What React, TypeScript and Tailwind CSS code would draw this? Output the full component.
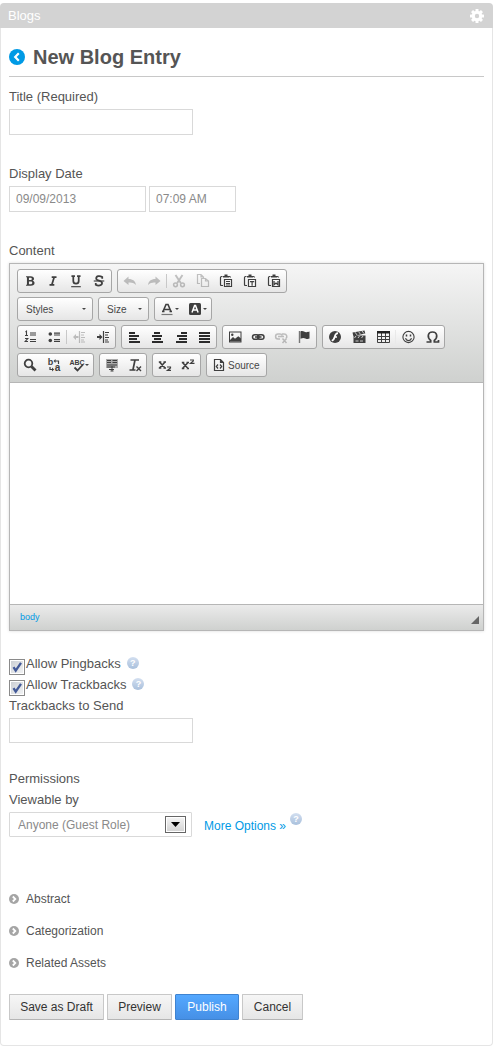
import type { ReactNode } from "react";

const ink = "#3f3f3f";

function Icon({ children, faded = false, size = 16 }: { children: ReactNode; faded?: boolean; size?: number }) {
  return (
    <svg width={size} height={size} viewBox="0 0 16 16" fill="none" stroke={ink} className={faded ? "shrink-0 opacity-30" : "shrink-0"} aria-hidden="true">
      {children}
    </svg>
  );
}

function Letter({ children, x = 8, y = 12, size = 12, bold = true }: { children: string; x?: number; y?: number; size?: number; bold?: boolean }) {
  return (
    <text x={x} y={y} fontSize={size} fontWeight={bold ? 700 : 400} textAnchor="middle" fill={ink} stroke="none" fontFamily="Liberation Sans, sans-serif">
      {children}
    </text>
  );
}

function Bars({ rows }: { rows: number[][] }) {
  return (
    <Icon>
      {rows.map(([x, w], i) => (
        <rect key={i} x={x} y={3 + i * 3} width={w} height="2" fill="#2b2b2b" stroke="none" />
      ))}
    </Icon>
  );
}

function Clipboard({ children }: { children: ReactNode }) {
  return (
    <Icon>
      <path d="M5 12.500H3.500Q2.500 12.500 2.500 11.500V4.500Q2.500 3.500 3.500 3.500H4.500M10.500 3.500H11.500Q12.500 3.500 12.500 4.500" strokeWidth="1.200" />
      <path d="M5 3h1.500V1.500h3V3H11v1.500H5z" fill={ink} stroke="none" />
      <path d="M6.500 6.500h7v7h-7z" fill="#fafafa" strokeWidth="1.200" />
      {children}
    </Icon>
  );
}

const undoPath = "M6.500 3.500L1.500 8l5 4V9.500c3-.3 5 .2 7.500 2.500-.4-3.800-3-6-7.500-6z";

const icons = {
  bold: <Icon size={14}><path d="M3.500 2.500h5.200c2.600 0 3.900 1.100 3.900 2.800 0 1.200-.7 2-1.800 2.400 1.500.4 2.400 1.300 2.400 2.700 0 2.100-1.600 3.100-4.300 3.100H3.500v-1.300h1V3.800h-1zM6.800 4.200v2.700h1.600c1.200 0 1.700-.5 1.700-1.400 0-.9-.6-1.300-1.700-1.300zm0 4.300v3.300h1.900c1.200 0 1.900-.6 1.900-1.700 0-1.100-.7-1.600-1.900-1.600z" fill={ink} fillRule="evenodd" stroke="none" /></Icon>,
  italic: <Icon size={14}><path d="M6.500 3.500h5.500M4 12.500h5.500M9.400 3.500l-2.800 9" strokeWidth="2" /></Icon>,
  underline: <Icon size={14}><path d="M2.800 2.500h4M9.200 2.500h4M4.900 3v5c0 4 6.200 4 6.200 0V3" strokeWidth="2" /><path d="M2.500 14.500h11" strokeWidth="1.300" /></Icon>,
  strike: <Icon size={14}><path d="M11.700 5.500V3.500C9 1.800 4.800 2.100 4.800 5c0 3.200 6.700 2.100 6.700 5.400 0 3-4.400 3.600-7.200 1.800v-2" strokeWidth="2" /><path d="M2 8h12" strokeWidth="1.300" /></Icon>,
  undo: <Icon faded><path d={undoPath} fill={ink} stroke="none" /></Icon>,
  redo: <Icon faded><path d={undoPath} fill={ink} stroke="none" transform="translate(16 0) scale(-1 1)" /></Icon>,
  cut: <Icon faded><path d="M4.500 2L9.800 10M11.500 2L6.200 10" strokeWidth="1.900" /><circle cx="4.500" cy="11.800" r="1.900" strokeWidth="1.500" /><circle cx="11.500" cy="11.800" r="1.900" strokeWidth="1.500" /></Icon>,
  copy: <Icon faded><path d="M5 10.500H2.500v-9H6l2.500 2.500V5M6 1.500V4h2.500M6.500 5.500h4L13.500 8v5.500h-7zM10.500 5.500V8h3" strokeWidth="1.200" /></Icon>,
  paste: <Clipboard><path d="M8 8.500h4M8 10.500h4M8 12h4" /></Clipboard>,
  pasteText: <Clipboard><path d="M8 8.700h4.200M10.100 8.700v4" strokeWidth="1.200" /></Clipboard>,
  pasteWord: <Clipboard><path d="M8 8v3.800l2-1.800 2 1.800V8" strokeWidth="1.300" /></Clipboard>,
  color: <Icon><path d="M4 10.500L7 3.500h2l3 7M5.500 8.500h5M3 10.500h2.500M10.500 10.500h2.500" strokeWidth="1.600" /><path d="M2.500 13.500h11" stroke="#777" strokeWidth="1.200" /></Icon>,
  background: <Icon><rect x="2" y="2" width="12" height="12" rx="1.500" fill={ink} stroke="none" /><path d="M5 11.500L7.600 4.500h.9l2.600 7M6.300 9h3.600" stroke="#fff" strokeWidth="1.500" /></Icon>,
  numbered: <Icon><path d="M8 4h6M8 6h6M8 10.500h6M8 12.500h6" strokeWidth="1.200" /><path d="M3.500 3l1-.8v4.300M3 6.500h3M3 9.500h2.800L3.200 12.500H6" strokeWidth="1.100" /></Icon>,
  bulleted: <Icon><circle cx="4.300" cy="5" r="1.800" fill={ink} stroke="none" /><circle cx="4.300" cy="11.500" r="1.800" fill={ink} stroke="none" /><path d="M8 4.200h6M8 6h6M8 10.700h6M8 12.500h6" strokeWidth="1.200" /></Icon>,
  outdent: <Icon faded><path d="M8.500 2v12M10 3.500h4M10 6h3M10 8.500h4M10 11h3M10 13h4" strokeWidth="1.200" /><path d="M2 8l3-3v2h2.500v2H5v2z" fill={ink} stroke="none" /></Icon>,
  indent: <Icon><path d="M8.500 2v12M10 3.500h4M10 6h3M10 8.500h4M10 11h3M10 13h4" strokeWidth="1.200" /><path d="M7.500 8l-3-3v2H2v2h2.500v2z" fill={ink} stroke="none" /></Icon>,
  left: <Bars rows={[[3, 6], [3, 10], [3, 8], [3, 11]]} />,
  center: <Bars rows={[[5, 6], [3, 10], [5, 7], [3, 11]]} />,
  right: <Bars rows={[[8, 6], [4, 10], [6, 8], [3, 11]]} />,
  justify: <Bars rows={[[3, 11], [3, 11], [3, 11], [3, 11]]} />,
  image: <Icon><rect x="2.500" y="3" width="11.500" height="10" /><circle cx="5.300" cy="5.700" r="1.200" fill={ink} stroke="none" /><path d="M3 12.500V11l3-3 2 1.800 3.300-2.600L14 9.500v3z" fill={ink} stroke="none" /></Icon>,
  link: <Icon><rect x="2.500" y="5.700" width="6.500" height="4.600" rx="2.300" strokeWidth="1.500" /><rect x="7.500" y="5.700" width="6.500" height="4.600" rx="2.300" strokeWidth="1.500" /><path d="M5 8h6.500" strokeWidth="1.500" /></Icon>,
  unlink: <Icon faded><path d="M7 10H5C1.800 10 1.800 5 5 5h2c1.300 0 2 .7 2.300 1.500M9 5h2c3 0 3.500 3 2 4.300M5 7.500h6" strokeWidth="1.500" /><path d="M9.500 9.500l4 4.500M13.500 9.500l-4 4.500" strokeWidth="1.500" /></Icon>,
  anchor: <Icon><path d="M3.500 2v12" strokeWidth="1.400" stroke="#777" /><path d="M4.500 2.500c2.500-1.300 3.800 1 6 .7 1.200 0 2-.5 3-.7v7c-2.500 1.300-4.500-.6-6-.6-1 0-2 .3-3 .8z" fill={ink} stroke="none" /></Icon>,
  flash: <Icon><circle cx="8" cy="8" r="6" fill={ink} stroke="none" /><path d="M11 4.200C8.500 4.400 8 6.500 7.600 8c-.5 1.900-.9 3.200-2.900 3.700M7.500 8h2.500" stroke="#fff" strokeWidth="1.700" /></Icon>,
  media: <Icon><path d="M1.500 3.500L13.500 1.500 14.300 4.500 2.300 7zM2.500 6.500h12v7.500h-12z" fill={ink} stroke="none" /><path d="M4 3.200l2 2.700M7.500 2.600l2 2.700M11 2l2 2.600M3.500 9l1.500-2M7 9l1.500-2M10.500 9L12 7M4.500 12h3M9 12h3" stroke="#ccc" /></Icon>,
  table: <Icon><path d="M2.500 4v9.500h12V4M6.500 4v9.500M10.500 4v9.500M2.500 7.500h12M2.500 10.500h12" /><path d="M2 2h13v2.500H2z" fill="#222" stroke="none" /></Icon>,
  smiley: <Icon><circle cx="8.500" cy="8" r="5.600" strokeWidth="1.100" /><path d="M6.500 5.500v2M10.500 5.500v2" strokeWidth="1.500" /><path d="M5.500 9.300c1 3 5 3 6 0" strokeWidth="1.200" /></Icon>,
  omega: <Icon><path d="M2.500 13h4.200v-1.500C3 8.700 3.500 3 8.500 3s5.500 5.700 1.800 8.500V13h4.200v-2" strokeWidth="1.700" /></Icon>,
  find: <Icon><circle cx="6.500" cy="6.500" r="3.800" strokeWidth="1.800" /><path d="M9.500 9.500l4 4" strokeWidth="2.800" /></Icon>,
  replace: <Icon><Letter x={4.500} y={8} size={9}>b</Letter><Letter x={11.500} y={14} size={10}>a</Letter><path d="M9 4h3.500v3M4 10v2.500h3.500" strokeWidth="1.200" /><path d="M9.500 2v4L7.500 4zM6 10.500v4l2-2z" fill={ink} stroke="none" /></Icon>,
  spell: <Icon><Letter x={8} y={8} size={7}>ABC</Letter><path d="M5.500 10.500l3 3 5.500-6" strokeWidth="1.800" /></Icon>,
  selectAll: <Icon><rect x="2" y="2" width="12" height="9" fill="#aaa" stroke="none" /><path d="M3 3.500h4M3 5.500h4M8.500 3.500h4.500M8.500 5.500h4.500M3 8h10M3 10h8M5 12.500h5" strokeWidth="1.200" /><path d="M8 9v5M6.500 14h3" /></Icon>,
  removeFormat: <Icon><path d="M3.500 3h8.500M8 3L6 12.500M2.500 13h6" strokeWidth="1.700" /><path d="M9.500 9.500l4.500 4.500M14 9.500L9.500 14" strokeWidth="1.400" /></Icon>,
  subscript: <Icon><path d="M2.500 5l5.500 6M8 5l-5.500 6M1.800 5h2.500M6.500 5H9M1.800 11h2.500M6.500 11H9" strokeWidth="1.600" /><path d="M10 10h3.500v1L10.500 13.300H14" strokeWidth="1.200" /></Icon>,
  superscript: <Icon><path d="M2.500 5.500l5.500 6M8 5.500l-5.500 6M1.800 5.500h2.500M6.500 5.500H9M1.800 11.500h2.500M6.500 11.500H9" strokeWidth="1.600" /><path d="M10 3H13.300v1L10.500 6.300h4" strokeWidth="1.200" /></Icon>,
  source: <Icon><path d="M3.500 2.500h6l3 3v8h-9zM9.500 2.500v3h3" strokeWidth="1.200" /><path d="M7 7.500L5.300 9.500 7 11.500M9 7.500l1.700 2L9 11.500" strokeWidth="1.200" /></Icon>,
};

function Caret() {
  return (
    <svg width="4" height="2" viewBox="0 0 4 2" className="shrink-0" aria-hidden="true">
      <path d="M0 0h4L2 2z" fill="#444" />
    </svg>
  );
}

function Group({ width, children }: { width: string; children: ReactNode }) {
  return (
    <div className={`flex h-6 rounded-[3px] border border-[#a6a6a6] bg-linear-to-b from-white to-[#e6e6e6] ${width}`}>
      {children}
    </div>
  );
}

function Tool({ name, icon, menu = false }: { name: string; icon: ReactNode; menu?: boolean }) {
  return (
    <button type="button" aria-label={name} title={name} className="flex min-w-0 flex-auto items-center justify-center">
      {icon}
      {menu && <Caret />}
    </button>
  );
}

function Separator() {
  return <span className="my-1 w-px bg-[#c8c8c8]" />;
}

function Combo({ label, width }: { label: string; width: string }) {
  return (
    <Group width={width}>
      <button type="button" className="flex flex-1 items-center justify-between pr-1.5 pl-2 text-[10px] text-[#474747]">
        {label}
        <Caret />
      </button>
    </Group>
  );
}

function Editor() {
  return (
    <div className="border border-[#b6b6b6] shadow-[0_0_3px_rgba(0,0,0,0.15)]">
      <div role="toolbar" aria-label="Editor toolbar" className="flex flex-col gap-1 border-b border-[#b6b6b6] bg-linear-to-b from-[#f5f5f5] to-[#cfd1cf] px-[7px] py-[5px]">
        <div className="flex gap-[5px]">
          <Group width="w-[95px]">
            <Tool name="Bold" icon={icons.bold} />
            <Tool name="Italic" icon={icons.italic} />
            <Tool name="Underline" icon={icons.underline} />
            <Tool name="Strike Through" icon={icons.strike} />
          </Group>
          <Group width="w-[170px]">
            <Tool name="Undo" icon={icons.undo} />
            <Tool name="Redo" icon={icons.redo} />
            <Separator />
            <Tool name="Cut" icon={icons.cut} />
            <Tool name="Copy" icon={icons.copy} />
            <Tool name="Paste" icon={icons.paste} />
            <Tool name="Paste as plain text" icon={icons.pasteText} />
            <Tool name="Paste from Word" icon={icons.pasteWord} />
          </Group>
        </div>
        <div className="flex gap-[5px]">
          <Combo label="Styles" width="w-[76px]" />
          <Combo label="Size" width="w-[51px]" />
          <Group width="w-[58px]">
            <Tool name="Text Color" icon={icons.color} menu />
            <Tool name="Background Color" icon={icons.background} menu />
          </Group>
        </div>
        <div className="flex gap-[5px]">
          <Group width="w-[99px]">
            <Tool name="Numbered List" icon={icons.numbered} />
            <Tool name="Bulleted List" icon={icons.bulleted} />
            <Separator />
            <Tool name="Decrease Indent" icon={icons.outdent} />
            <Tool name="Increase Indent" icon={icons.indent} />
          </Group>
          <Group width="w-24">
            <Tool name="Align Left" icon={icons.left} />
            <Tool name="Center" icon={icons.center} />
            <Tool name="Align Right" icon={icons.right} />
            <Tool name="Justify" icon={icons.justify} />
          </Group>
          <Group width="w-[95px]">
            <Tool name="Image" icon={icons.image} />
            <Tool name="Link" icon={icons.link} />
            <Tool name="Unlink" icon={icons.unlink} />
            <Tool name="Anchor" icon={icons.anchor} />
          </Group>
          <Group width="w-[123px]">
            <Tool name="Flash" icon={icons.flash} />
            <Tool name="Media" icon={icons.media} />
            <Tool name="Table" icon={icons.table} />
            <span className="my-1 w-px bg-[#e9e9e9]" />
            <Tool name="Smiley" icon={icons.smiley} />
            <Tool name="Special Character" icon={icons.omega} />
          </Group>
        </div>
        <div className="flex gap-[5px]">
          <Group width="w-[77px]">
            <Tool name="Find" icon={icons.find} />
            <Tool name="Replace" icon={icons.replace} />
            <Tool name="Spell Check" icon={icons.spell} menu />
          </Group>
          <Group width="w-12">
            <Tool name="Select All" icon={icons.selectAll} />
            <Tool name="Remove Format" icon={icons.removeFormat} />
          </Group>
          <Group width="w-[49px]">
            <Tool name="Subscript" icon={icons.subscript} />
            <Tool name="Superscript" icon={icons.superscript} />
          </Group>
          <Group width="w-[61px]">
            <button type="button" className="flex flex-1 items-center gap-px pl-1 text-[10px] text-[#474747]">
              {icons.source}
              Source
            </button>
          </Group>
        </div>
      </div>
      <textarea id="content" className="block h-[221px] w-full resize-none bg-white p-5 text-[13px] outline-none" />
      <div className="flex h-[26px] items-center justify-between border-t border-[#b6b6b6] bg-linear-to-b from-[#ebebeb] to-[#cfd1cf] pr-1 pl-2.5">
        <a href="#body" className="text-[9px] text-[#009ae5]">body</a>
        <svg width="8" height="8" viewBox="0 0 8 8" className="mt-1" aria-hidden="true">
          <path d="M8 0v8H0z" fill="#666" />
        </svg>
      </div>
    </div>
  );
}

function Help() {
  return (
    <button type="button" aria-label="Help" className="flex size-3 shrink-0 items-center justify-center rounded-full bg-linear-to-b from-[#d3dff0] to-[#a9c0dc] text-[9px] leading-3 font-bold text-white">
      ?
    </button>
  );
}

function Check({ id, label }: { id: string; label: string }) {
  return (
    <div className="flex h-[21px]">
      <span className="relative mt-1.5 size-4 shrink-0">
        <input id={id} type="checkbox" defaultChecked className="peer block size-4 appearance-none border border-[#8a8a8a] bg-linear-to-br from-[#c9cdd2] to-[#f4f5f6] shadow-[inset_0_0_0_1px_#fff]" />
        <svg viewBox="0 0 16 16" className="pointer-events-none absolute inset-0 hidden size-4 peer-checked:block" aria-hidden="true">
          <path d="M4.500 8.200l2.200 3.500L12 3.800" fill="none" stroke="#435a98" strokeWidth="2.300" />
        </svg>
      </span>
      <label htmlFor={id} className="mr-1.5 ml-px leading-[21px]">{label}</label>
      <span className="mt-1"><Help /></span>
    </div>
  );
}

const fieldBox = "border border-[#d9d9d9] bg-white text-[12px] text-[#8a8a8a] px-1.5 outline-none";
const buttonBase = "h-[26px] rounded-[1px] border bg-linear-to-b text-center text-[12px]";
const plainButton = `${buttonBase} border-[#c8c8c8] border-b-[#b5b5b5] from-[#f6f6f6] to-[#e6e6e6] text-[#333]`;

function Section({ title }: { title: string }) {
  return (
    <button type="button" aria-expanded="false" className="flex h-8 items-center gap-[7px] text-[12px]">
      <svg width="10" height="10" viewBox="0 0 10 10" aria-hidden="true">
        <circle cx="5" cy="5" r="5" fill="#a5a5a5" />
        <path d="M3.800 2.500L6.300 5 3.800 7.500" fill="none" stroke="#fff" strokeWidth="1.800" />
      </svg>
      {title}
    </button>
  );
}

export default function App() {
  return (
    <div className="bg-white pt-[3px] pr-0.5 font-['Liberation_Sans',Arial,sans-serif] text-[13px] text-[#555]">
      <header className="flex h-[25px] items-center justify-between rounded-t-[4px] bg-[#d3d3d3] pr-[9px] pl-2 text-white">
        <span>Blogs</span>
        <button type="button" aria-label="Options">
          <svg width="14" height="14" viewBox="0 0 14 14" className="block" aria-hidden="true">
            <g fill="#fff">
              <path fillRule="evenodd" d="M7 1.800a5.200 5.200 0 1 0 0 10.400A5.200 5.200 0 0 0 7 1.800zm0 3a2.200 2.200 0 1 1 0 4.400 2.200 2.200 0 0 1 0-4.400z" />
              {[0, 45, 90, 135, 180, 225, 270, 315].map((turn) => (
                <rect key={turn} x="5.500" y="0" width="3" height="3" rx=".5" transform={`rotate(${turn} 7 7)`} />
              ))}
            </g>
          </svg>
        </button>
      </header>
      <main className="rounded-b-[4px] border border-t-0 border-[#e5e5e5] px-2 pb-[25px]">
        <div className="flex items-center gap-2 border-b border-[#c8c8c8] pt-2.5">
          <a href="#back" aria-label="Back">
            <svg width="16" height="16" viewBox="0 0 16 16" className="block" aria-hidden="true">
              <circle cx="8" cy="8" r="8" fill="#009ae5" />
              <path d="M9.800 4.300L6.200 8l3.600 3.700" fill="none" stroke="#fff" strokeWidth="2.200" />
            </svg>
          </a>
          <h1 className="text-[20px] leading-[38px] font-bold">New Blog Entry</h1>
        </div>

        <form className="pt-2.5" onSubmit={(event) => event.preventDefault()}>
          <label htmlFor="title" className="mb-0.5 block leading-5">Title (Required)</label>
          <input id="title" type="text" className={`${fieldBox} block h-[26px] w-[184px]`} />

          <label htmlFor="date" className="mt-[29px] mb-0.5 block leading-5">Display Date</label>
          <div className="flex gap-[3px]">
            <input id="date" type="text" defaultValue="09/09/2013" className={`${fieldBox} h-[26px] w-[137px]`} />
            <input type="text" aria-label="Display time" defaultValue="07:09 AM" className={`${fieldBox} h-[26px] w-[87px]`} />
          </div>

          <label htmlFor="content" className="mt-[29px] mb-0.5 block leading-5">Content</label>
          <Editor />

          <div className="mt-[22px]">
            <Check id="pingbacks" label="Allow Pingbacks" />
            <Check id="trackbacks" label="Allow Trackbacks" />
            <label htmlFor="send" className="mb-0.5 block leading-[21px]">Trackbacks to Send</label>
            <input id="send" type="text" className={`${fieldBox} block h-[25px] w-[184px]`} />
          </div>

          <div className="mt-[25px]">
            <p className="leading-[21px]">Permissions</p>
            <label htmlFor="viewable" className="mb-0.5 block leading-[21px]">Viewable by</label>
            <div className="flex">
              <div className="relative w-[183px]">
                <select id="viewable" className="block h-[25px] w-full appearance-none rounded-[1px] border border-[#d9d9d9] bg-white px-2 text-[12px] text-[#8a8a8a]">
                  <option>Anyone (Guest Role)</option>
                </select>
                <span className="pointer-events-none absolute top-1 right-1.5 flex h-[17px] w-[21px] items-center justify-center border border-[#666] bg-linear-to-b from-[#f5f5f5] to-[#d2d2d2] shadow-[inset_0_0_0_1px_#fff]">
                  <svg width="9" height="5" viewBox="0 0 9 5" aria-hidden="true">
                    <path d="M0 0h9L4.500 5z" fill="#000" />
                  </svg>
                </span>
              </div>
              <a href="#permissions" className="mr-1 ml-3 self-end text-[12px] leading-[22px] text-[#009ae5]">More Options »</a>
              <span className="mt-px"><Help /></span>
            </div>
          </div>

          <div className="mt-[46px] flex flex-col items-start">
            <Section title="Abstract" />
            <Section title="Categorization" />
            <Section title="Related Assets" />
          </div>

          <div className="mt-[15px] flex gap-[3px]">
            <button type="button" className={`${plainButton} w-[95px]`}>Save as Draft</button>
            <button type="button" className={`${plainButton} w-[65px]`}>Preview</button>
            <button type="submit" className={`${buttonBase} w-16 border-[#3f83d0] from-[#54a8ff] to-[#4690e6] text-white`}>Publish</button>
            <button type="button" className={`${plainButton} w-[61px]`}>Cancel</button>
          </div>
        </form>
      </main>
    </div>
  );
}
